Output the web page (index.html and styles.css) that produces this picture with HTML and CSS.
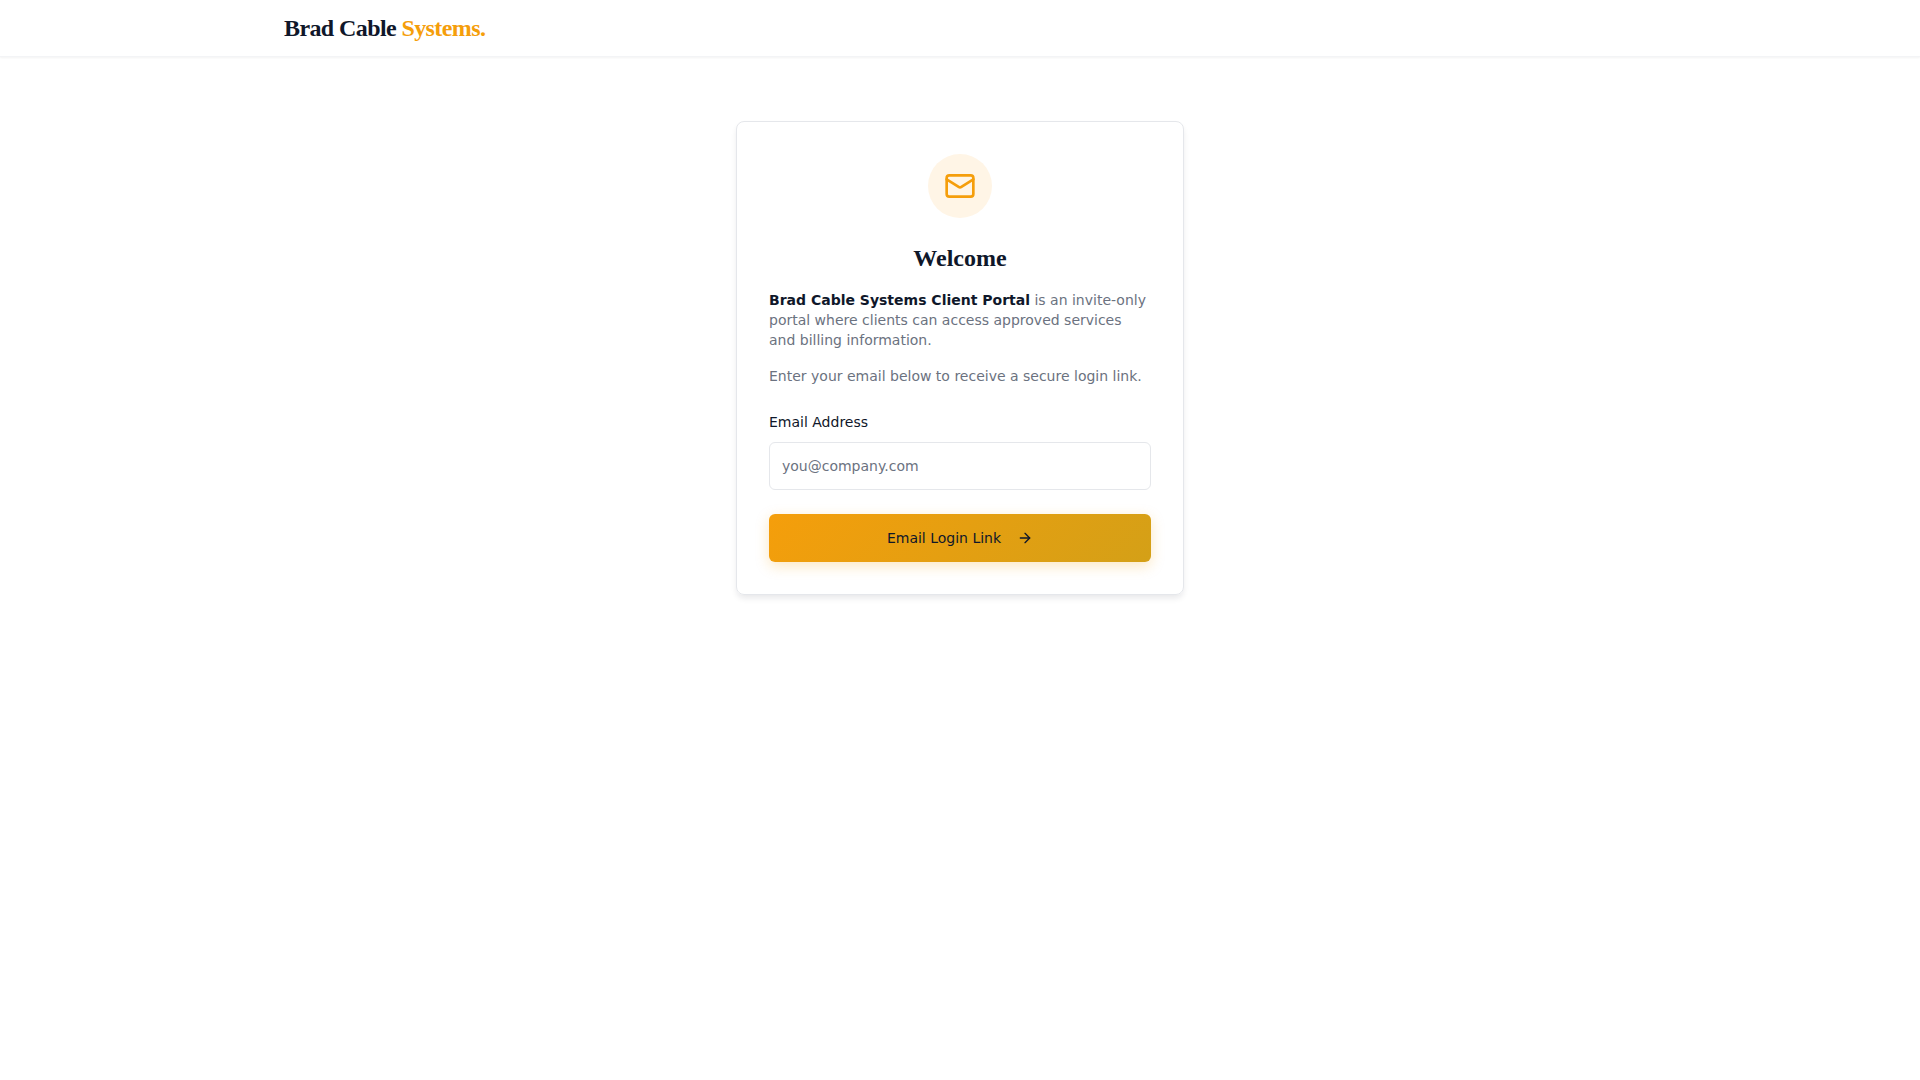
FILE: index.html
```html
<!DOCTYPE html>
<html lang="en">
  <head>
    <meta charset="UTF-8" />
    <meta name="viewport" content="width=device-width, initial-scale=1.0" />
    <title>Brad Cable Systems Client Portal</title>
    <link rel="stylesheet" href="styles.css">
  </head>

  <body>
    <header class="header">
      <div class="container">
        <a class="logo" href="/">Brad Cable <span>Systems.</span></a>
      </div>
    </header>

    <main class="main">
      <div class="card">
        <div class="icon">
          <svg width="32" height="32" viewBox="0 0 24 24" fill="none" stroke="currentColor" stroke-width="2" stroke-linecap="round" stroke-linejoin="round">
            <rect width="20" height="16" x="2" y="4" rx="2" />
            <path d="m22 7-8.97 5.7a1.94 1.94 0 0 1-2.06 0L2 7" />
          </svg>
        </div>
        <h1>Welcome</h1>
        <div class="intro">
          <p><strong>Brad Cable Systems Client Portal</strong> is an invite-only portal where clients can access approved services and billing information.</p>
          <p>Enter your email below to receive a secure login link.</p>
        </div>
        <form class="form">
          <div class="field">
            <label for="email">Email Address</label>
            <input type="email" id="email" name="email" placeholder="you@company.com" required />
          </div>
          <button type="submit">
            Email Login Link
            <svg width="16" height="16" viewBox="0 0 24 24" fill="none" stroke="currentColor" stroke-width="2" stroke-linecap="round" stroke-linejoin="round">
              <path d="M5 12h14" />
              <path d="m12 5 7 7-7 7" />
            </svg>
          </button>
        </form>
      </div>
    </main>
  </body>
</html>
```
FILE: styles.css
```css
* {
  box-sizing: border-box;
}

body {
  margin: 0;
  background: #fff;
  color: #0f172a;
  font-family: "DejaVu Sans", sans-serif;
  font-size: 14px;
  line-height: 20px;
}

.header {
  border-bottom: 1px solid #f3f4f6;
  box-shadow: 0 1px 2px rgba(0, 0, 0, 0.05);
}

.container {
  max-width: 1400px;
  margin: 0 auto;
  padding: 12px 24px;
}

.logo {
  display: inline-block;
  color: #0f172a;
  font-family: "Liberation Serif", serif;
  font-size: 24px;
  font-weight: bold;
  line-height: 32px;
  letter-spacing: -0.025em;
  text-decoration: none;
}

.logo span {
  color: #f59e0b;
}

.main {
  padding: 64px 16px;
}

.card {
  max-width: 448px;
  margin: 0 auto;
  padding: 32px;
  border: 1px solid #e5e7eb;
  border-radius: 8px;
  box-shadow: 0 4px 6px -1px rgba(15, 23, 42, 0.1);
}

.icon {
  display: flex;
  align-items: center;
  justify-content: center;
  width: 64px;
  height: 64px;
  margin: 0 auto 24px;
  border-radius: 50%;
  background: #fff5e6;
  color: #f59e0b;
}

h1 {
  margin: 0 0 16px;
  font-family: "Liberation Serif", serif;
  font-size: 24px;
  line-height: 32px;
  text-align: center;
}

.intro {
  margin-bottom: 24px;
  color: #6b7280;
}

.intro p {
  margin: 0 0 16px;
}

.intro strong {
  color: #0f172a;
}

.form {
  display: flex;
  flex-direction: column;
  gap: 24px;
}

.field {
  display: flex;
  flex-direction: column;
  gap: 8px;
}

.field label {
  line-height: 24px;
}

.field input {
  height: 48px;
  padding: 8px 12px;
  border: 1px solid #e5e7eb;
  border-radius: 6px;
  background: #fff;
  color: #0f172a;
  font: inherit;
}

.field input::placeholder {
  color: #6b7280;
}

button {
  display: flex;
  align-items: center;
  justify-content: center;
  gap: 16px;
  height: 48px;
  border: 0;
  border-radius: 6px;
  background: linear-gradient(135deg, #f59e0b, #d4a017);
  box-shadow: 0 4px 14px rgba(245, 158, 11, 0.25);
  color: #0f172a;
  font: inherit;
  cursor: pointer;
}
```
